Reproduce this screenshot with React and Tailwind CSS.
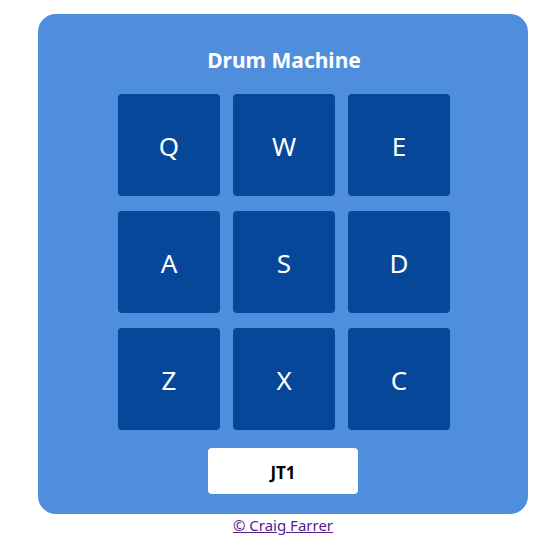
export default function App() {
  const keys = ["Q", "W", "E", "A", "S", "D", "Z", "X", "C"];
  return (
    <div className="w-[556px] h-[556px] bg-white" style={{ fontFamily: '"Noto Sans", "Open Sans", sans-serif' }}>
      <div className="pt-[14px] pl-[38px]">
        <div className="w-[490px] h-[500px] rounded-[18px] bg-[#4f8ddd] flex flex-col items-center">
          <h1 className="mt-[32px] ml-[2px] text-[21px] leading-[28px] font-bold text-white">Drum Machine</h1>
          <div className="mt-[20px] ml-[2px] grid grid-cols-3 gap-x-[13px] gap-y-[15px]">
            {keys.map((k) => (
              <div key={k} className="w-[102px] h-[102px] rounded-[4px] bg-[#06479a] flex items-center justify-center pt-[2px] text-white text-[26px]">
                {k}
              </div>
            ))}
          </div>
          <div className="mt-[18px] w-[150px] h-[46px] bg-white rounded-[4px] flex items-center justify-center pt-[4px] text-[17px] font-bold text-black">
            JT1
          </div>
        </div>
        <div className="w-[490px] text-center -mt-[1px]">
          <a href="#" className="text-[15px] leading-[20px] text-[#551a8b] underline">© Craig Farrer</a>
        </div>
      </div>
    </div>
  );
}
